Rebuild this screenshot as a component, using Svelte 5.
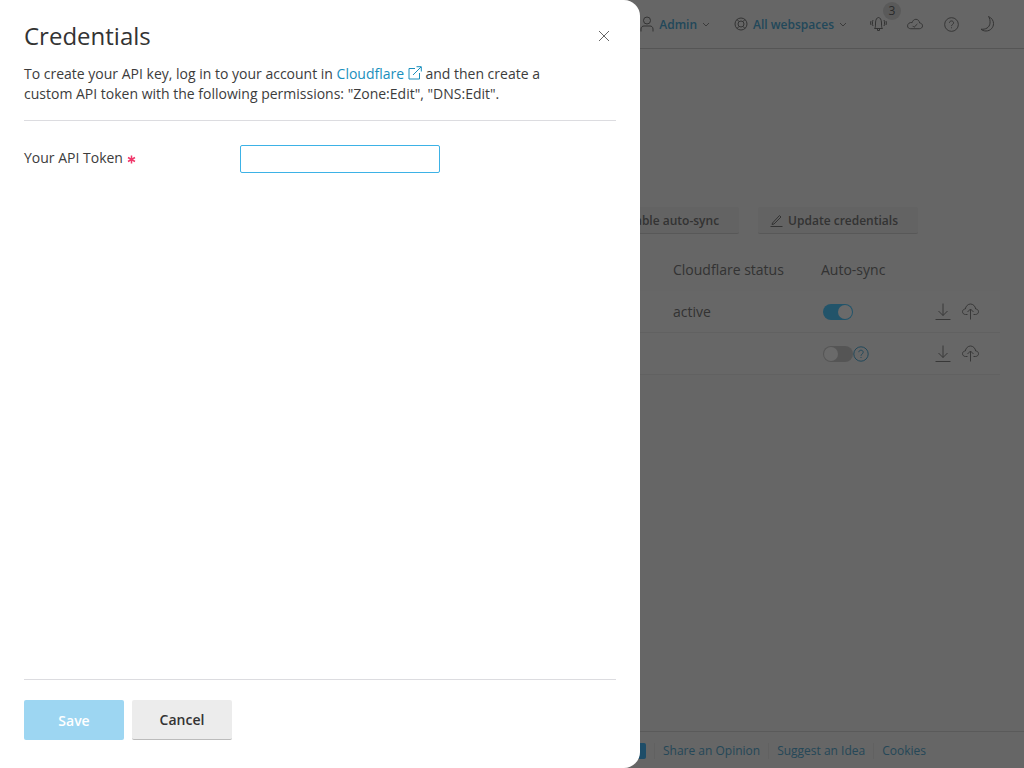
<script>
  const rows = [
    { status: "active", on: true },
    { status: "", on: false }
  ];
</script>

<div class="page">
  <header class="topbar">
    <div class="menu user">
      <svg width="14" height="16" viewBox="0 0 14 16"><circle cx="7" cy="4.500" r="3.500"/><path d="M1 15.500v-2.500c0-2 1.500-3 3-3h6c1.500 0 3 1 3 3v2.500"/></svg>
      <span>Admin</span>
      <svg class="chev" width="8" height="5" viewBox="0 0 8 5"><path d="M1 1l3 3 3-3"/></svg>
    </div>
    <div class="menu spaces">
      <svg width="14" height="14" viewBox="0 0 14 14"><circle cx="7" cy="7" r="6"/><circle cx="7" cy="7" r="3"/><path d="M3 2.500l2 2M11 2.500l-2 2M3 11.500l2-2M11 11.500l-2-2"/></svg>
      <span>All webspaces</span>
      <svg class="chev" width="8" height="5" viewBox="0 0 8 5"><path d="M1 1l3 3 3-3"/></svg>
    </div>
    <div class="tools">
      <div class="bell">
        <svg width="17" height="16" viewBox="0 0 17 16"><path d="M4.500 12.500c1-1 1-2 1-5.500s1.500-5.500 3-5.500 3 2 3 5.500 0 4.500 1 5.500zM7.500 12.500v2h2v-2M3 4c-.8 2-.8 4 0 6M1 5c-.5 1-.5 3 0 4M14 4c.8 2 .8 4 0 6M16 5c.5 1 .5 3 0 4"/></svg>
        <span class="badge">3</span>
      </div>
      <svg width="16" height="12" viewBox="0 0 17 12"><path d="M4 11h9c2 0 3.500-1.200 3.500-3S15 5 13.500 5C13 2.500 11.500 1 9.500 1 7.500 1 6 2.500 5.500 4.500 3 4 .6 5.500.6 8c0 2 1.400 3 3.400 3zM6 8l1.500 1.500L11 6"/></svg>
      <svg width="15" height="15" viewBox="0 0 16 16"><circle cx="8" cy="8" r="7.300"/><path d="M5.800 6.200C5.800 5 6.800 4.200 8 4.200s2.200.8 2.200 2c0 1.800-2.200 1.800-2.200 3.500M8 11v1"/></svg>
      <svg width="15" height="16" viewBox="0 0 15 16"><path d="M8.500 .5c3.200 1.500 5 4 5 7 0 4-3 7.500-7.500 7.500-2.200 0-4-.8-5-1.800 4.500.5 8.500-1.500 9-6C10.200 4.500 9.800 2.300 8.500 .5z"/></svg>
    </div>
  </header>

  <main class="content">
    <div class="actions">
      <button class="ghost sync">Disable auto-sync</button>
      <button class="ghost">
        <svg width="13" height="13" viewBox="0 0 13 13"><path d="M2.500 9L9.500 1.500l1.500 1.500-7 7-2 .5zM.5 12.500h12"/></svg>
        Update credentials
      </button>
    </div>

    <div class="grid head">
      <span></span>
      <span>Cloudflare status</span>
      <span>Auto-sync</span>
      <span></span>
    </div>
    {#each rows as row}
      <div class="grid row">
        <span></span>
        <span>{row.status}</span>
        <div class="sync-cell">
          <span class="toggle" class:on={row.on}><i></i></span>
          {#if !row.on}
            <svg class="help" width="16" height="16" viewBox="0 0 16 16"><circle cx="8" cy="8" r="7.200"/><path d="M5.800 6.200C5.800 5 6.800 4.200 8 4.200s2.200.8 2.200 2c0 1.800-2.200 1.800-2.200 3.500M8 11v1"/></svg>
          {/if}
        </div>
        <div class="row-icons">
          <svg width="16" height="17" viewBox="0 0 16 17"><path d="M8 .5v12M3.500 8L8 12.500 12.500 8M.5 16.500h15"/></svg>
          <svg width="17" height="17" viewBox="0 0 17 17"><path d="M5.500 11.500H3.500C1.800 11.500.5 10.300.5 8.700S1.800 6 3.300 6C3.800 3 6 1 8.500 1s4.700 2 5.200 5c1.500 0 2.800 1.100 2.800 2.700s-1.300 2.800-3 2.800h-2M8.500 16.500V6M5.500 9l3-3 3 3"/></svg>
        </div>
      </div>
    {/each}
  </main>

  <footer class="foot">
    <span class="chat"></span>
    <a href="#opinion">Share an Opinion</a>
    <a href="#idea">Suggest an Idea</a>
    <a href="#cookies">Cookies</a>
  </footer>
</div>

<div class="overlay"></div>

<aside class="drawer">
  <div class="title-row">
    <h1>Credentials</h1>
    <svg class="close" width="12" height="12" viewBox="0 0 12 12"><path d="M1 1l10 10M11 1L1 11"/></svg>
  </div>
  <p class="intro">
    To create your API key, log in to your account in <a href="#cf">Cloudflare <svg width="14" height="14" viewBox="0 0 14 14"><path d="M7 2.500H1v10.500h10.500V7M5 9l8-8M8.500 .7H13.300V5.500"/></svg></a> and then create a<br />
    custom API token with the following permissions: "Zone:Edit", "DNS:Edit".
  </p>
  <div class="field">
    <label for="token">Your API Token<svg class="req" width="9" height="9" viewBox="0 0 9 9"><path d="M4.500 .5v8M1 2.500l7 4M8 2.500l-7 4"/></svg></label>
    <input id="token" type="text" />
  </div>
  <div class="buttons">
    <button class="save">Save</button>
    <button class="cancel">Cancel</button>
  </div>
</aside>

<style>
  :global(body) {
    margin: 0;
    font-family: "Open Sans", "Liberation Sans", sans-serif;
    overflow: hidden;
  }

  svg {
    fill: none;
    stroke: currentColor;
    stroke-width: 1;
    flex: none;
  }

  .page {
    height: 768px;
    display: flex;
    flex-direction: column;
    background: #ccc;
    color: #666;
    font-size: 13px;
  }

  .topbar {
    height: 49px;
    box-sizing: border-box;
    border-bottom: 1px solid #aaa;
    display: flex;
    align-items: center;
    justify-content: flex-end;
    padding-right: 29px;
    font-size: 12px;
    font-weight: 600;
  }

  .menu {
    display: flex;
    align-items: center;
    gap: 5px;
    color: #4490b4;
  }
  .menu svg:first-child { color: #666; }
  .menu .chev { color: #777; }
  .user { margin-right: 24px; }
  .spaces { margin-right: 23px; }

  .tools {
    display: flex;
    align-items: center;
    gap: 21px;
    color: #666;
  }
  .bell {
    position: relative;
    display: flex;
    margin-right: -1px;
  }
  .badge {
    position: absolute;
    top: -14px;
    left: 13px;
    width: 18px;
    height: 18px;
    line-height: 18px;
    text-align: center;
    border-radius: 50%;
    background: #b4b4b4;
    font-size: 12px;
    font-weight: 400;
    color: #555;
  }

  .content {
    flex: 1;
    padding: 158px 24px 0 0;
  }

  .actions {
    display: flex;
    justify-content: flex-end;
    gap: 19px;
    padding-right: 82px;
    margin-bottom: 14px;
  }

  .ghost {
    height: 27px;
    padding: 0 20px 0 12px;
    display: flex;
    align-items: center;
    gap: 5px;
    border: 0;
    border-bottom: 1px solid #b0b0b0;
    border-radius: 2px;
    background: #c6c6c6;
    color: #666;
    font: 600 12px "Open Sans", sans-serif;
  }
  .sync { width: 200px; padding: 0 20px; justify-content: flex-end; }

  .grid {
    display: grid;
    grid-template-columns: 1fr 148px 100px 79px;
    align-items: center;
  }
  .head {
    height: 43px;
    font-size: 14px;
  }
  .row {
    height: 41px;
    background: #cfcfcf;
    border-bottom: 1px solid #c2c2c2;
    font-size: 14px;
  }

  .sync-cell {
    display: flex;
    align-items: center;
    padding-left: 2px;
  }
  .toggle {
    width: 30px;
    height: 16px;
    border-radius: 8px;
    background: #aaa;
    display: flex;
    align-items: center;
    padding: 1px;
    box-sizing: border-box;
  }
  .toggle i {
    width: 14px;
    height: 14px;
    border-radius: 50%;
    background: #d4d4d4;
  }
  .toggle.on { background: #44a8d4; justify-content: flex-end; }
  .help { color: #4490b4; }

  .row-icons {
    display: flex;
    align-items: center;
    gap: 11px;
    padding-left: 14px;
    color: #707070;
  }

  .foot {
    height: 37px;
    box-sizing: border-box;
    padding: 2px 98px 0 0;
    border-top: 1px solid #b4b4b4;
    display: flex;
    justify-content: flex-end;
    align-items: center;
    font-size: 12px;
  }
  .foot a {
    color: #4a8fb0;
    text-decoration: none;
    padding-left: 8px;
    margin-left: 8px;
    border-left: 1px solid #c2c2c2;
    line-height: 16px;
  }
  .chat {
    width: 16px;
    height: 16px;
    border-radius: 2px;
    background: #3c9ad0;
  }

  .overlay {
    position: fixed;
    inset: 0;
    background: rgba(0,0,0,.5);
  }

  .drawer {
    position: fixed;
    left: 0;
    top: 0;
    bottom: 0;
    width: 640px;
    box-sizing: border-box;
    padding: 0 24px 28px;
    background: #fff;
    border-radius: 0 16px 16px 0;
    display: flex;
    flex-direction: column;
    color: #333;
  }

  .title-row {
    display: flex;
    justify-content: space-between;
    align-items: center;
    height: 72px;
    padding-right: 6px;
  }
  h1 {
    margin: 0;
    font-size: 24px;
    font-weight: 400;
    line-height: 32px;
  }
  .close { color: #666; }

  .intro {
    margin: -8px 0 0;
    padding-bottom: 16px;
    border-bottom: 1px solid #dcdce0;
    font-size: 14px;
    line-height: 20px;
    color: #3c3c3c;
  }
  .intro a {
    color: #1a8fbd;
    text-decoration: none;
  }
  .intro a svg { vertical-align: -1px; }

  .field {
    flex: 1;
    display: flex;
    align-items: flex-start;
    padding-top: 24px;
  }
  label {
    width: 216px;
    font-size: 14px;
    line-height: 25px;
    color: #3c3c3c;
  }
  .req {
    color: #f0386b;
    stroke-width: 1.500;
    margin-left: 4px;
    vertical-align: -1px;
  }
  input {
    width: 200px;
    height: 28px;
    box-sizing: border-box;
    border: 1px solid #3db2e6;
    border-radius: 2px;
    outline: none;
  }

  .buttons {
    display: flex;
    gap: 8px;
    padding-top: 20px;
    border-top: 1px solid #dcdce0;
  }
  .buttons button {
    width: 100px;
    height: 40px;
    border: 0;
    border-radius: 2px;
    font: 600 14px "Open Sans", sans-serif;
  }
  .save {
    background: #9dd6f2;
    color: #fff;
  }
  .buttons .cancel {
    background: #ececec;
    color: #333;
    border-bottom: 1px solid #bbb;
  }
</style>
